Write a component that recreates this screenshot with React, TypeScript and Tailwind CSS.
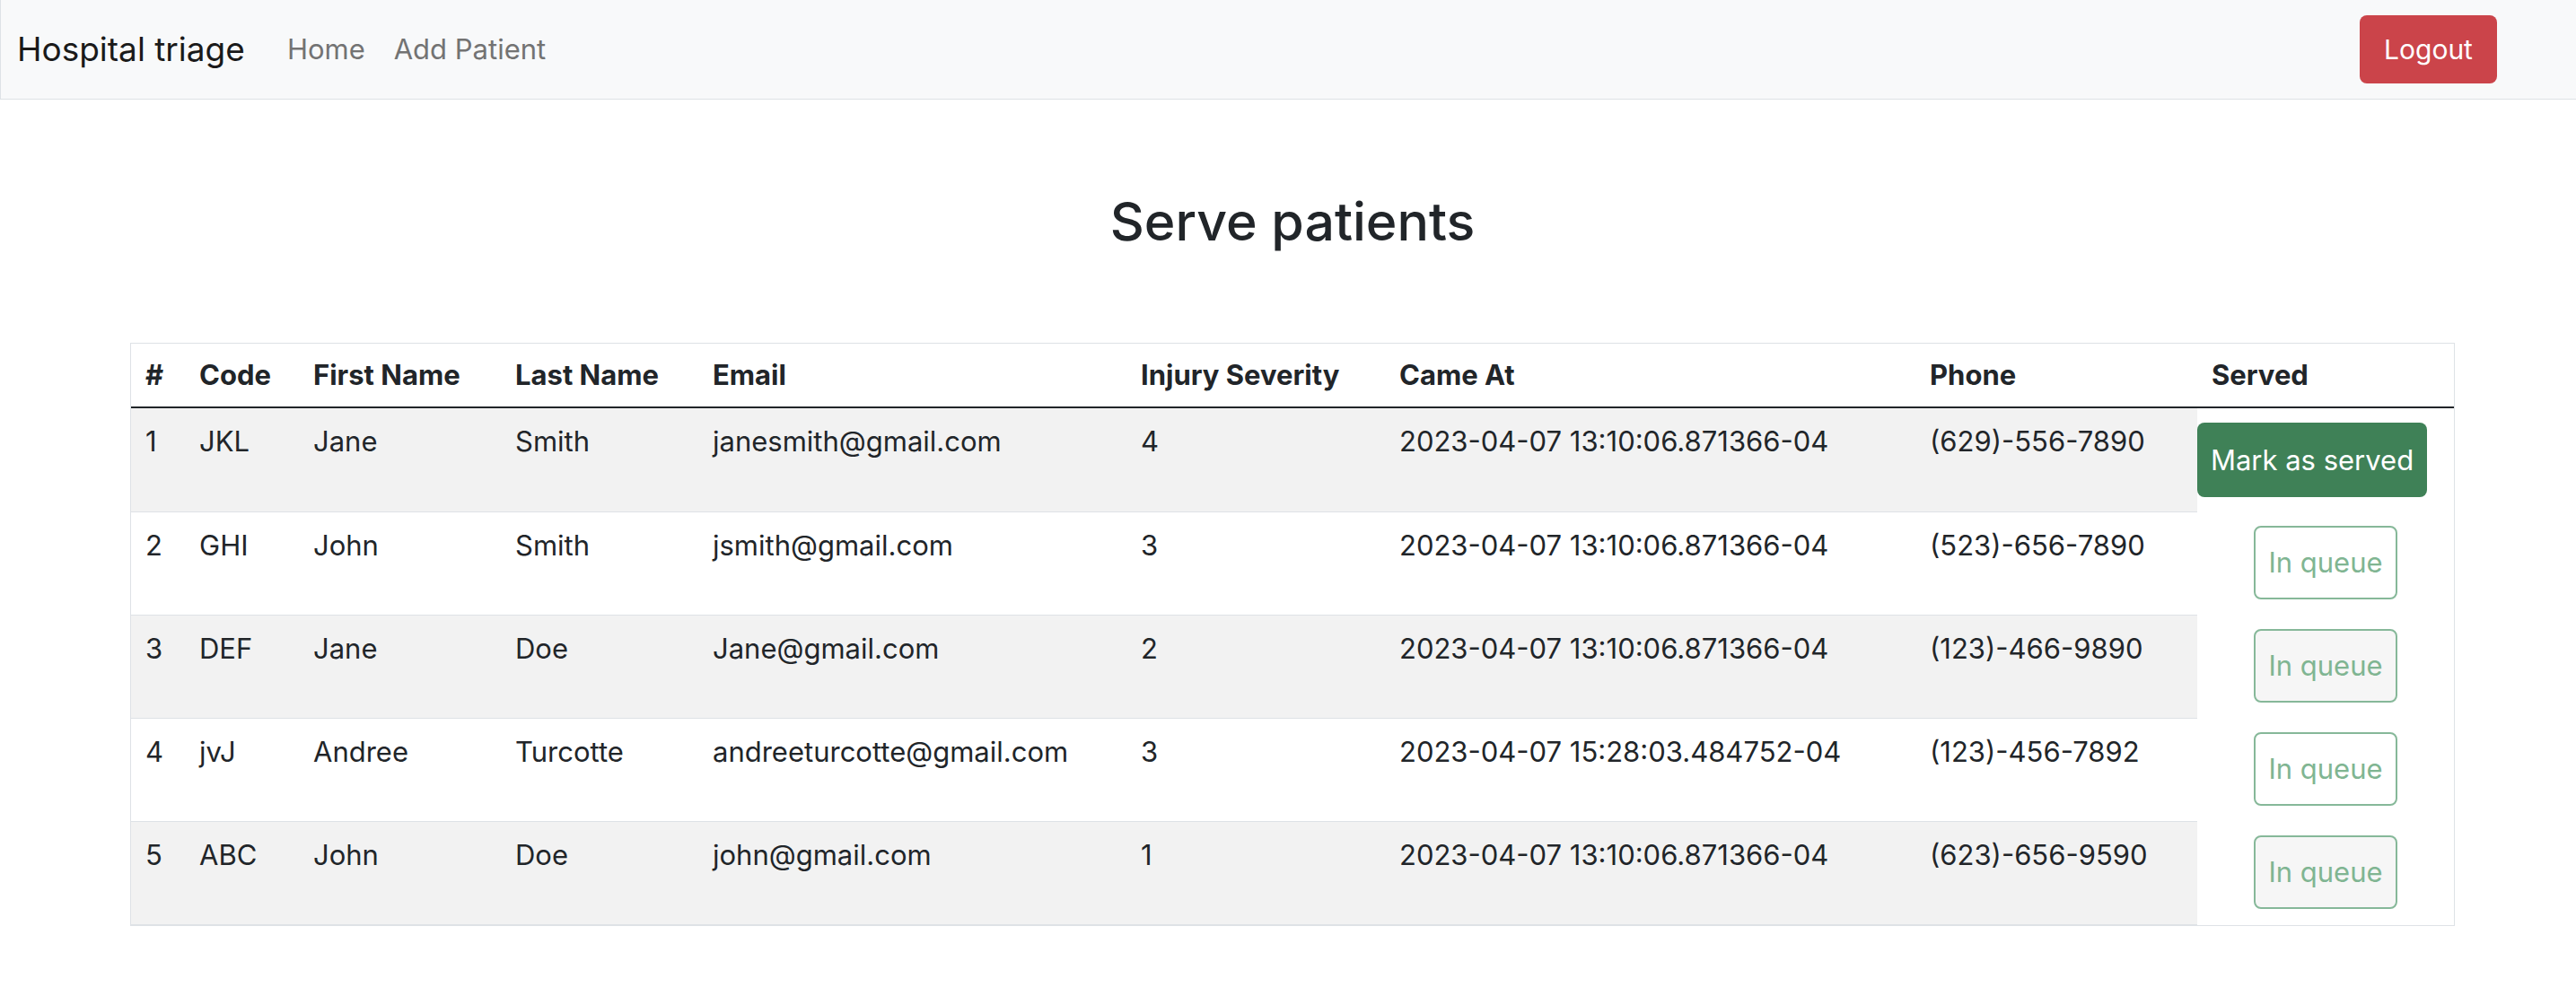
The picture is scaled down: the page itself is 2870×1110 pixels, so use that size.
import React from "react";

interface Patient {
  id: number;
  code: string;
  firstName: string;
  lastName: string;
  email: string;
  severity: number;
  cameAt: string;
  phone: string;
  served: boolean;
}

const patients: Patient[] = [
  { id: 1, code: "JKL", firstName: "Jane", lastName: "Smith", email: "janesmith@gmail.com", severity: 4, cameAt: "2023-04-07 13:10:06.871366-04", phone: "(629)-556-7890", served: true },
  { id: 2, code: "GHI", firstName: "John", lastName: "Smith", email: "jsmith@gmail.com", severity: 3, cameAt: "2023-04-07 13:10:06.871366-04", phone: "(523)-656-7890", served: false },
  { id: 3, code: "DEF", firstName: "Jane", lastName: "Doe", email: "Jane@gmail.com", severity: 2, cameAt: "2023-04-07 13:10:06.871366-04", phone: "(123)-466-9890", served: false },
  { id: 4, code: "jvJ", firstName: "Andree", lastName: "Turcotte", email: "andreeturcotte@gmail.com", severity: 3, cameAt: "2023-04-07 15:28:03.484752-04", phone: "(123)-456-7892", served: false },
  { id: 5, code: "ABC", firstName: "John", lastName: "Doe", email: "john@gmail.com", severity: 1, cameAt: "2023-04-07 13:10:06.871366-04", phone: "(623)-656-9590", served: false },
];

const headers = ["#", "Code", "First Name", "Last Name", "Email", "Injury Severity", "Came At", "Phone"];
const colWidths = ["w-[60px]", "w-[127px]", "w-[225px]", "w-[220px]", "w-[477px]", "w-[288px]", "w-[591px]", "w-[314px]"];

const Navbar = () => (
  <nav className="flex h-[111px] items-center border-b border-l border-[#dee2e6] bg-[#f8f9fa] pl-[18px] pr-[88px]">
    <span className="text-[37px] text-[#1a1a1a]">Hospital triage</span>
    <a className="ml-[47px] text-[31px] text-[#737373]">Home</a>
    <a className="ml-[32px] text-[31px] text-[#737373]">Add Patient</a>
    <button className="ml-auto h-[76px] w-[153px] rounded-[8px] bg-[#cb444a] text-[30px] text-white">
      Logout
    </button>
  </nav>
);

const PatientRow = ({ p, index }: { p: Patient; index: number }) => {
  const striped = index % 2 === 0;
  const cell = striped
    ? "border-b border-[#dee2e6] bg-[#f2f2f2] px-[16px] py-[14px] align-top"
    : "border-b border-[#dee2e6] px-[16px] py-[14px] align-top";
  const values = [p.id, p.code, p.firstName, p.lastName, p.email, p.severity, p.cameAt, p.phone];

  return (
    <tr className="h-[115px]">
      {values.map((v, i) => (
        <td key={i} className={cell}>
          {v}
        </td>
      ))}
      <td className="py-[16px] align-top">
        {p.served ? (
          <button className="h-[83px] w-[256px] rounded-[8px] bg-[#3f8157] text-[31px] text-white">
            Mark as served
          </button>
        ) : (
          <div className="flex justify-center">
            <button
              className={
                striped
                  ? "h-[82px] w-[160px] rounded-[8px] border-2 border-[#86b899] bg-[#f6f6f6] text-[31px] text-[#80b592]"
                  : "h-[82px] w-[160px] rounded-[8px] border-2 border-[#86b899] bg-white text-[31px] text-[#80b592]"
              }
            >
              In queue
            </button>
          </div>
        )}
      </td>
    </tr>
  );
};

export default function App() {
  return (
    <div className="min-h-[1110px] w-[2870px] bg-white font-['Inter',sans-serif] text-[#212529]">
      <Navbar />
      <main className="ml-[145px] w-[2590px]">
        <h2 className="mt-[101px] mb-[99px] text-center text-[59px] font-medium leading-[1.2]">
          Serve patients
        </h2>
        <div className="border border-[#dee2e6]">
          <table className="w-full table-fixed border-collapse text-left text-[31px] leading-[1.5]">
            <thead>
              <tr>
                {headers.map((h, i) => (
                  <th key={h} className={`${colWidths[i]} border-b-2 border-[#212529] px-[16px] py-[12px] font-bold`}>
                    {h}
                  </th>
                ))}
                <th className="border-b-2 border-[#212529] px-[16px] py-[12px] font-bold">Served</th>
              </tr>
            </thead>
            <tbody>
              {patients.map((p, i) => (
                <PatientRow key={p.id} p={p} index={i} />
              ))}
            </tbody>
          </table>
        </div>
      </main>
    </div>
  );
}
